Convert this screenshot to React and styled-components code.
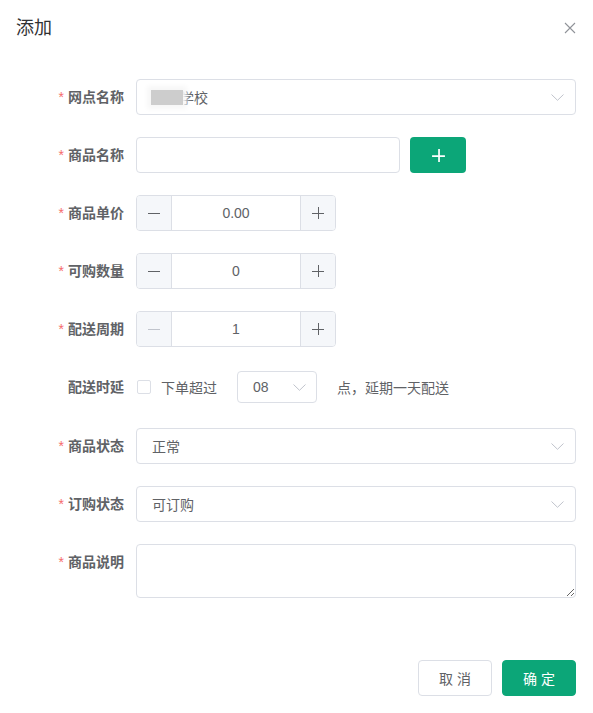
import React from "react";
import styled, { createGlobalStyle } from "styled-components";

const GlobalStyle = createGlobalStyle`
  html, body {
    margin: 0;
    padding: 0;
    background: #fff;
  }
  body {
    font-family: "Liberation Sans", "Noto Sans CJK SC", sans-serif;
    color: #606266;
  }
  * { box-sizing: border-box; }
`;

const Dialog = styled.div`
  width: 593px;
  height: 713px;
  background: #fff;
  display: flex;
  flex-direction: column;
`;

const Header = styled.div`
  display: flex;
  justify-content: space-between;
  align-items: center;
  padding: 16px 17px 16px 16px;
`;

const Title = styled.span`
  font-size: 18px;
  line-height: 24px;
  color: #303133;
`;

const CloseButton = styled.button`
  border: none;
  background: none;
  padding: 0;
  width: 12px;
  height: 12px;
  display: flex;
  cursor: pointer;
`;

const Form = styled.form`
  padding: 23px 17px 0 16px;
  flex: 1;
`;

const FormItem = styled.div`
  display: flex;
  align-items: flex-start;
  margin-bottom: ${(p) => p.$gap || "22px"};
`;

const Label = styled.label`
  width: 120px;
  flex-shrink: 0;
  padding-right: 12px;
  text-align: right;
  font-size: 14px;
  font-weight: 700;
  line-height: 36px;
  color: #606266;

  &::before {
    content: ${(p) => (p.$required ? '"*"' : '""')};
    color: #f56c6c;
    margin-right: 4px;
    font-weight: 400;
  }
`;

const Control = styled.div`
  flex: 1;
  display: flex;
  align-items: center;
  min-height: 36px;
`;

const Input = styled.input`
  width: ${(p) => p.$width || "100%"};
  height: 36px;
  border: 1px solid #dcdfe6;
  border-radius: 4px;
  padding: 0 15px;
  font-size: 14px;
  color: #606266;
  font-family: inherit;
  outline: none;
`;

const SelectBox = styled.div`
  position: relative;
  width: ${(p) => p.$width || "100%"};
  height: ${(p) => (p.$small ? "32px" : "36px")};
  border: 1px solid #dcdfe6;
  border-radius: 4px;
  padding: 0 30px 0 15px;
  display: flex;
  align-items: center;
  font-size: 14px;
  color: #606266;
  margin: ${(p) => p.$margin || "0"};
`;

const Arrow = styled.svg`
  position: absolute;
  right: ${(p) => (p.$small ? "10px" : "11px")};
  top: 50%;
  margin-top: -3px;
`;

const Masked = styled.span`
  display: inline-block;
  width: 32px;
  height: 15px;
  background: #cdcdcd;
  box-shadow: 0 0 5px 4px #f7f7f7;
  position: relative;
  z-index: 1;
  margin-right: -3px;
  margin-left: -1px;
`;

const Stepper = styled.div`
  width: 200px;
  height: 36px;
  display: flex;
  border: 1px solid #dcdfe6;
  border-radius: 4px;
  overflow: hidden;
`;

const StepButton = styled.button`
  width: 35px;
  height: 100%;
  border: none;
  background: #f5f7fa;
  display: flex;
  align-items: center;
  justify-content: center;
  padding: 0;
  border-${(p) => (p.$side === "left" ? "right" : "left")}: 1px solid #dcdfe6;
  cursor: ${(p) => (p.$disabled ? "not-allowed" : "pointer")};
`;

const StepValue = styled.div`
  flex: 1;
  display: flex;
  align-items: center;
  justify-content: center;
  font-size: 14px;
  color: #606266;
`;

const AddButton = styled.button`
  width: 56px;
  height: 36px;
  margin-left: 10px;
  border: none;
  border-radius: 4px;
  background: #0ca678;
  display: flex;
  align-items: center;
  justify-content: center;
  padding: 0;
`;

const Checkbox = styled.span`
  width: 14px;
  height: 14px;
  border: 1px solid #dcdfe6;
  border-radius: 2px;
  background: #fff;
  margin-left: 1px;
`;

const InlineText = styled.span`
  font-size: 14px;
  color: #606266;
  margin-left: ${(p) => p.$gap || "0"};
`;

const TextArea = styled.textarea`
  width: 100%;
  height: 54px;
  border: 1px solid #dcdfe6;
  border-radius: 4px;
  padding: 5px 15px;
  font-size: 14px;
  font-family: inherit;
  resize: vertical;
  outline: none;
`;

const Footer = styled.div`
  display: flex;
  justify-content: flex-end;
  gap: 10px;
  padding: 0 17px 17px 0;
`;

const Button = styled.button`
  width: 74px;
  height: 36px;
  border-radius: 4px;
  font-size: 14px;
  font-family: inherit;
  letter-spacing: 4px;
  padding: 0 0 0 4px;
  border: 1px solid ${(p) => (p.$primary ? "#0ca678" : "#dcdfe6")};
  background: ${(p) => (p.$primary ? "#0ca678" : "#fff")};
  color: ${(p) => (p.$primary ? "#fff" : "#606266")};
  cursor: pointer;
`;

const ChevronDown = ({ small }) => (
  <Arrow $small={small} width="13" height="7" viewBox="0 0 13 7">
    <path d="M0.5 0.5 L6.5 6.3 L12.5 0.5" fill="none" stroke="#c0c4cc" strokeWidth="1" />
  </Arrow>
);

const MinusIcon = ({ color }) => (
  <svg width="14" height="14" viewBox="0 0 14 14">
    <path d="M1 7.5 H13" stroke={color} strokeWidth="1" />
  </svg>
);

const PlusIcon = ({ color, size = 14, width = 1 }) => (
  <svg width={size} height={size} viewBox="0 0 14 14">
    <path d="M1 7.5 H13 M7.5 1 V13" stroke={color} strokeWidth={width} />
  </svg>
);

const NumberField = ({ value, minDisabled }) => (
  <Stepper>
    <StepButton type="button" $side="left" $disabled={minDisabled}>
      <MinusIcon color={minDisabled ? "#c0c4cc" : "#606266"} />
    </StepButton>
    <StepValue>{value}</StepValue>
    <StepButton type="button" $side="right">
      <PlusIcon color="#606266" />
    </StepButton>
  </Stepper>
);

export default function App() {
  return (
    <>
      <GlobalStyle />
      <Dialog>
        <Header>
          <Title>添加</Title>
          <CloseButton type="button" aria-label="close">
            <svg width="12" height="12" viewBox="0 0 12 12">
              <path d="M1 1 L11 11 M11 1 L1 11" stroke="#909399" strokeWidth="1.1" />
            </svg>
          </CloseButton>
        </Header>

        <Form onSubmit={(e) => e.preventDefault()}>
          <FormItem>
            <Label $required>网点名称</Label>
            <Control>
              <SelectBox>
                <Masked />
                学校
                <ChevronDown />
              </SelectBox>
            </Control>
          </FormItem>

          <FormItem>
            <Label $required>商品名称</Label>
            <Control>
              <Input $width="264px" />
              <AddButton type="button">
                <PlusIcon color="#ffffff" size={15} width={1.6} />
              </AddButton>
            </Control>
          </FormItem>

          <FormItem>
            <Label $required>商品单价</Label>
            <Control>
              <NumberField value="0.00" />
            </Control>
          </FormItem>

          <FormItem>
            <Label $required>可购数量</Label>
            <Control>
              <NumberField value="0" />
            </Control>
          </FormItem>

          <FormItem>
            <Label $required>配送周期</Label>
            <Control>
              <NumberField value="1" minDisabled />
            </Control>
          </FormItem>

          <FormItem $gap="23px">
            <Label>配送时延</Label>
            <Control>
              <Checkbox />
              <InlineText $gap="10px">下单超过</InlineText>
              <SelectBox $small $width="80px" $margin="0 20px 0 20px">
                08
                <ChevronDown small />
              </SelectBox>
              <InlineText>点，延期一天配送</InlineText>
            </Control>
          </FormItem>

          <FormItem>
            <Label $required>商品状态</Label>
            <Control>
              <SelectBox>
                正常
                <ChevronDown />
              </SelectBox>
            </Control>
          </FormItem>

          <FormItem>
            <Label $required>订购状态</Label>
            <Control>
              <SelectBox>
                可订购
                <ChevronDown />
              </SelectBox>
            </Control>
          </FormItem>

          <FormItem>
            <Label $required>商品说明</Label>
            <Control>
              <TextArea rows={2} />
            </Control>
          </FormItem>
        </Form>

        <Footer>
          <Button type="button">取消</Button>
          <Button type="button" $primary>确定</Button>
        </Footer>
      </Dialog>
    </>
  );
}
